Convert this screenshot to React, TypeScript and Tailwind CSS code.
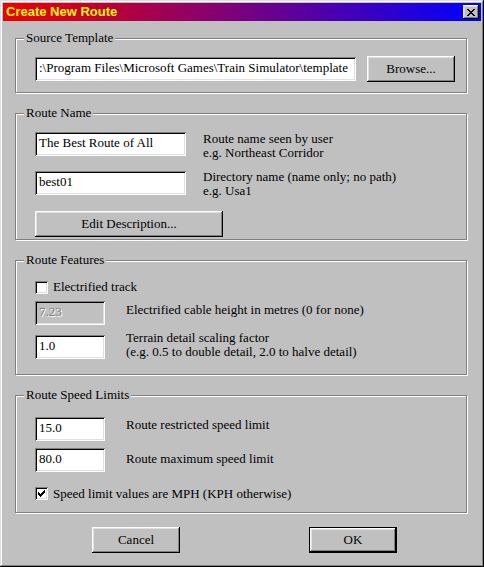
import type { ReactNode } from 'react';

const raised =
  'bg-[#c0c0c0] shadow-[inset_-1px_-1px_#000,inset_1px_1px_#fff,inset_-2px_-2px_#808080,inset_2px_2px_#dfdfdf]';
const sunken =
  'shadow-[inset_1px_1px_#808080,inset_-1px_-1px_#fff,inset_2px_2px_#000,inset_-2px_-2px_#dfdfdf]';

function Group({ label, className, children }: { label: string; className: string; children: ReactNode }) {
  return (
    <div className={`relative border border-[#808080] shadow-[inset_1px_1px_#fff,1px_1px_#fff] ${className}`}>
      <span className="absolute left-[8px] top-[-9px] bg-[#c0c0c0] px-[2px] leading-[16px]">{label}</span>
      {children}
    </div>
  );
}

function Field({ value, className, disabled }: { value: string; className: string; disabled?: boolean }) {
  return (
    <div
      className={`flex h-[24px] items-center overflow-hidden whitespace-nowrap pb-[2px] pl-[4px] ${sunken} ${
        disabled ? 'bg-[#c0c0c0] text-[#808080]' : 'bg-white'
      } ${className}`}
    >
      {value}
    </div>
  );
}

function Button({ children, className }: { children: ReactNode; className: string }) {
  return (
    <button className={`flex h-[26px] w-[88px] items-center justify-center pb-[1px] ${raised} ${className}`}>
      {children}
    </button>
  );
}

function Checkbox({ checked }: { checked?: boolean }) {
  return (
    <div className={`flex h-[13px] w-[13px] shrink-0 items-center justify-center bg-white ${sunken}`}>
      {checked && (
        <svg width="7" height="7" viewBox="0 0 7 7" shapeRendering="crispEdges">
          <path
            fill="#000"
            d="M6 0h1v1h-1zM5 1h2v1h-2zM0 2h1v1h-1zM4 2h3v1h-3zM0 3h2v1h-2zM3 3h3v1h-3zM0 4h5v1h-5zM1 5h3v1h-3zM2 6h1v1h-1z"
          />
        </svg>
      )}
    </div>
  );
}

export default function App() {
  return (
    <div className="flex h-[567px] w-[484px] flex-col bg-[#c0c0c0] p-[3px] font-['Liberation_Serif',serif] text-[13px] text-black shadow-[inset_-1px_-1px_#000,inset_1px_1px_#dfdfdf,inset_-2px_-2px_#808080,inset_2px_2px_#fff]">
      {/* title bar */}
      <div className="flex h-[18px] shrink-0 items-center justify-between bg-linear-to-r/srgb from-[#f00000] to-[#0000ff] pl-[3px] pr-[2px]">
        <span className="font-['Liberation_Sans',sans-serif] text-[13px] font-bold text-[#ffff00]">Create New Route</span>
        <button className={`flex h-[14px] w-[16px] items-center justify-center ${raised}`}>
          <svg width="8" height="7" viewBox="0 0 8 7" shapeRendering="crispEdges">
            <path
              fill="#000"
              d="M0 0h2v1h-2zM6 0h2v1h-2zM1 1h2v1h-2zM5 1h2v1h-2zM2 2h4v1h-4zM3 3h2v1h-2zM2 4h4v1h-4zM1 5h2v1h-2zM5 5h2v1h-2zM0 6h2v1h-2zM6 6h2v1h-2z"
            />
          </svg>
        </button>
      </div>

      <div className="ml-[12px] flex w-[452px] flex-col">
        <Group label="Source Template" className="mt-[17px] h-[55px] pl-[19px] pt-[17px]">
          <div className="flex items-center">
            <Field value=":\Program Files\Microsoft Games\Train Simulator\template" className="w-[321px]" />
            <Button className="ml-[11px]">Browse...</Button>
          </div>
        </Group>

        <Group label="Route Name" className="mt-[20px] h-[127px] pl-[19px] pt-[18px]">
          <div className="flex items-start">
            <Field value="The Best Route of All" className="w-[151px]" />
            <div className="ml-[17px] leading-[14px]">
              Route name seen by user
              <br />
              e.g. Northeast Corridor
            </div>
          </div>
          <div className="mt-[11px] flex items-start">
            <Field value="best01" className="w-[151px]" />
            <div className="ml-[17px] mt-[-1px] leading-[14px]">
              Directory name (name only; no path)
              <br />
              e.g. Usa1
            </div>
          </div>
          <Button className="mt-[13px] w-[188px]">Edit Description...</Button>
        </Group>

        <Group label="Route Features" className="mt-[20px] h-[115px] pl-[19px] pt-[20px]">
          <div className="flex h-[13px] items-center">
            <Checkbox />
            <span className="ml-[5px] mt-[-2px] leading-[14px]">Electrified track</span>
          </div>
          <div className="mt-[7px] flex items-start">
            <Field value="7.23" disabled className="w-[70px] [text-shadow:1px_1px_#fff]" />
            <div className="ml-[21px] mt-[2px] leading-[14px]">Electrified cable height in metres (0 for none)</div>
          </div>
          <div className="mt-[10px] flex items-start">
            <Field value="1.0" className="w-[70px]" />
            <div className="ml-[21px] mt-[-4px] leading-[14px]">
              Terrain detail scaling factor
              <br />
              (e.g. 0.5 to double detail, 2.0 to halve detail)
            </div>
          </div>
        </Group>

        <Group label="Route Speed Limits" className="mt-[20px] h-[118px] pl-[19px] pt-[21px]">
          <div className="flex items-start">
            <Field value="15.0" className="w-[70px]" />
            <div className="ml-[21px] mt-[1px] leading-[14px]">Route restricted speed limit</div>
          </div>
          <div className="mt-[7px] flex items-start">
            <Field value="80.0" className="w-[70px]" />
            <div className="ml-[21px] mt-[4px] leading-[14px]">Route maximum speed limit</div>
          </div>
          <div className="mt-[15px] flex h-[13px] items-center">
            <Checkbox checked />
            <span className="ml-[5px] leading-[14px]">Speed limit values are MPH (KPH otherwise)</span>
          </div>
        </Group>

        <div className="mt-[14px] flex">
          <Button className="ml-[77px]">Cancel</Button>
          <Button className="ml-[129px] border border-black">OK</Button>
        </div>
      </div>
    </div>
  );
}
